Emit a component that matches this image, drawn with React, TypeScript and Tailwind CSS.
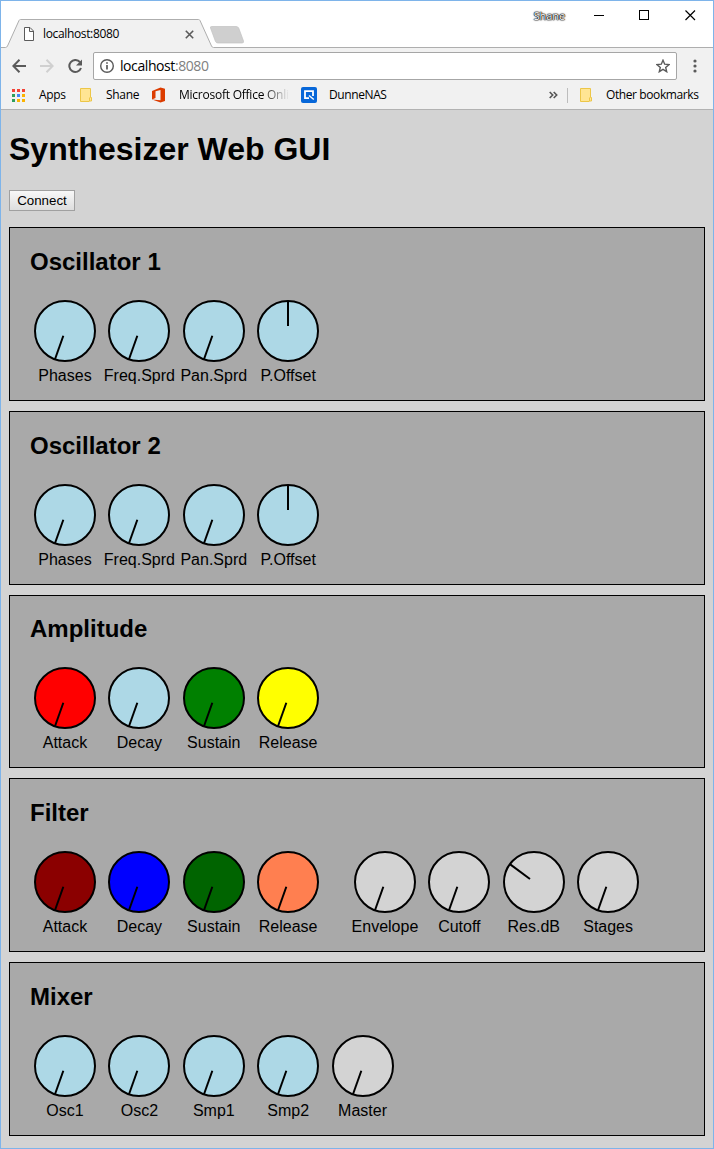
import React from "react";

type KnobSpec = { label: string; color: string; angle?: number };

const BLUE = "#add8e6";
const GRAY = "#d3d3d3";

function Knob({ label, color, angle = 199.5 }: KnobSpec) {
  return (
    <div className="flex w-[74.4px] shrink-0 flex-col items-center">
      <svg width="62" height="62" viewBox="-31 -31 62 62" className="block">
        <circle r="30" fill={color} stroke="#000" strokeWidth="2" />
        <line y1="-5" y2="-30" stroke="#000" strokeWidth="2" transform={`rotate(${angle})`} />
      </svg>
      <div className="mt-[5px] h-[18px] text-base leading-[18px] whitespace-nowrap">{label}</div>
    </div>
  );
}

function Panel({ title, groups }: { title: string; groups: KnobSpec[][] }) {
  return (
    <section className="h-[173.75px] shrink-0 border border-black bg-[#a9a9a9] pt-[19.9px]">
      <h2 className="h-7 pl-5 text-2xl leading-7 font-bold">{title}</h2>
      <div className="mt-6 flex gap-[22.4px] pl-[17.8px]">
        {groups.map((g, i) => (
          <div key={i} className="flex">
            {g.map((k) => (
              <Knob key={k.label} {...k} />
            ))}
          </div>
        ))}
      </div>
    </section>
  );
}

const osc: KnobSpec[][] = [
  [
    { label: "Phases", color: BLUE },
    { label: "Freq.Sprd", color: BLUE },
    { label: "Pan.Sprd", color: BLUE },
    { label: "P.Offset", color: BLUE, angle: 0 },
  ],
];

const panels: { title: string; groups: KnobSpec[][] }[] = [
  { title: "Oscillator 1", groups: osc },
  { title: "Oscillator 2", groups: osc },
  {
    title: "Amplitude",
    groups: [
      [
        { label: "Attack", color: "#ff0000" },
        { label: "Decay", color: BLUE },
        { label: "Sustain", color: "#008000" },
        { label: "Release", color: "#ffff00" },
      ],
    ],
  },
  {
    title: "Filter",
    groups: [
      [
        { label: "Attack", color: "#8b0000" },
        { label: "Decay", color: "#0000ff" },
        { label: "Sustain", color: "#006400" },
        { label: "Release", color: "#ff7f50" },
      ],
      [
        { label: "Envelope", color: GRAY },
        { label: "Cutoff", color: GRAY },
        { label: "Res.dB", color: GRAY, angle: -53.5 },
        { label: "Stages", color: GRAY },
      ],
    ],
  },
  {
    title: "Mixer",
    groups: [
      [
        { label: "Osc1", color: BLUE },
        { label: "Osc2", color: BLUE },
        { label: "Smp1", color: BLUE },
        { label: "Smp2", color: BLUE },
        { label: "Master", color: GRAY },
      ],
    ],
  },
];

function FolderIcon() {
  return (
    <svg width="12" height="14" viewBox="0 0 12 14" className="block shrink-0">
      <path d="M.5.5h10v9h1v3.500h-2.500v.5H.5z" fill="#ffe593" stroke="#ecc648" />
      <path d="M9.500 9.500v3.500" stroke="#ecc648" fill="none" />
    </svg>
  );
}

function AppsIcon() {
  const colors = ["#f34235", "#f34235", "#f34235", "#2e9e5b", "#3f86f5", "#fbb300", "#2e9e5b", "#fbb300", "#fbb300"];
  return (
    <svg width="13" height="13" viewBox="0 0 13 13" className="block shrink-0" shapeRendering="crispEdges">
      {colors.map((c, i) => (
        <rect key={i} x={(i % 3) * 5} y={Math.floor(i / 3) * 5} width="3" height="3" fill={c} />
      ))}
    </svg>
  );
}

function TabStrip() {
  return (
    <div className="relative flex h-[47px] bg-white">
      <svg width="712" height="47" viewBox="1 1 712 47" className="absolute inset-0">
        <path d="M0 47.500H5.500Q6.800 47.500 7.500 46L19 20.500Q19.500 19.500 20.500 19.500H198.500Q199.500 19.500 200 20.500L211.500 46Q212.200 47.500 213.500 47.500H714V49H0Z" fill="#f1f1f1" stroke="#aeaeae" />
        <path d="M211.500 26.500H236Q238 26.500 238.700 28L243.500 41Q244 43 242 43H218Q216.300 43 215.500 41.500L210.500 28Q210 26.500 211.500 26.500Z" fill="#cfcfcf" stroke="#c2c2c2" strokeWidth=".7" />
      </svg>
      <div className="relative mt-[19px] ml-[22px] flex h-[28px] w-[173px] items-center">
        <svg width="12" height="14" viewBox="0 0 12 14" className="block">
          <path d="M1.500.5H7L10.500 4V13.500H1.500ZM6.500.5V4.500H10.500" fill="#fff" stroke="#5a5a5a" />
        </svg>
        <span className="ml-2 font-['Open_Sans',sans-serif] text-[12px] tracking-[-0.35px]">localhost:8080</span>
        <svg width="9" height="9" viewBox="0 0 9 9" className="mr-[2px] ml-auto block">
          <path d="M.8.8L8.200 8.200M8.200.8L.8 8.200" stroke="#5a5a5a" strokeWidth="1.600" />
        </svg>
      </div>
      <div className="relative ml-auto flex h-[29px] items-center pr-[17px]">
        <span className="mr-[29px] pt-px font-['Open_Sans',sans-serif] text-[11px] tracking-[-0.1px] text-white [text-shadow:0_0_1px_#000,0_0_1px_#000,0_0_2px_#000,0_0_1px_#000]">Shane</span>
        <svg width="102" height="11" viewBox="0 0 102 11" className="block" shapeRendering="crispEdges">
          <path d="M0 5.500H10M45.500.5H54.500V9.500H45.500Z" fill="none" stroke="#000" />
          <path d="M91.500.5L101 10M101 .5L91.500 10" fill="none" stroke="#000" strokeWidth="1.200" shapeRendering="auto" />
        </svg>
      </div>
    </div>
  );
}

function Toolbar() {
  return (
    <div className="flex h-[36px] items-center bg-[#f1f1f1] pl-[11px]">
      <svg width="14" height="14" viewBox="0 0 14 14" className="block" fill="none" stroke="#5a5a5a" strokeWidth="2">
        <path d="M14 7H1.500M7.500.8L1.300 7L7.500 13.200" />
      </svg>
      <svg width="14" height="14" viewBox="0 0 14 14" className="ml-[14px] block" fill="none" stroke="#d0d0d0" strokeWidth="2">
        <path d="M0 7H12.500M6.500.8L12.700 7L6.500 13.200" />
      </svg>
      <svg width="15" height="15" viewBox="0 0 15 15" className="ml-[14px] block">
        <path d="M12 3.200A6 6 0 1 0 13 9" fill="none" stroke="#5a5a5a" strokeWidth="2" />
        <path d="M14 .5V6.500H8Z" fill="#5a5a5a" />
      </svg>
      <div className="ml-[10px] flex h-[28px] w-[584px] items-center rounded-[2px] border border-[#a6a6a6] bg-white pr-[6px] pl-[6px]">
        <svg width="14" height="14" viewBox="0 0 14 14" className="block">
          <circle cx="7" cy="7" r="6.300" fill="none" stroke="#5a5a5a" strokeWidth="1.400" />
          <path d="M7 6V10.500M7 3.200V4.800" stroke="#5a5a5a" strokeWidth="1.700" />
        </svg>
        <span className="ml-[6px] font-['Open_Sans',sans-serif] text-[14px] leading-5 tracking-[-0.42px]">
          localhost<span className="text-[#808080]">:8080</span>
        </span>
        <svg width="14" height="14" viewBox="0 0 14 14" className="ml-auto block">
          <path d="M7 1.200L8.700 5.200L13 5.600L9.700 8.400L10.700 12.700L7 10.400L3.300 12.700L4.300 8.400L1 5.600L5.300 5.200Z" fill="none" stroke="#5a5a5a" strokeWidth="1.400" />
        </svg>
      </div>
      <svg width="4" height="14" viewBox="0 0 4 14" className="ml-[16px] block" fill="#5a5a5a">
        <circle cx="2" cy="2" r="1.600" />
        <circle cx="2" cy="7" r="1.600" />
        <circle cx="2" cy="12" r="1.600" />
      </svg>
    </div>
  );
}

function Bookmarks() {
  return (
    <div className="flex h-[26px] items-center border-b border-[#b2b2b2] bg-[#f1f1f1] pb-[3px] pl-[11px] font-['Open_Sans',sans-serif] text-[12px] leading-4 whitespace-nowrap">
      <AppsIcon />
      <span className="ml-[14px] w-[41px] tracking-[-0.3px]">Apps</span>
      <FolderIcon />
      <span className="ml-[14px] w-[46px] tracking-[-0.3px]">Shane</span>
      <svg width="13" height="16" viewBox="0 0 13 16" className="block shrink-0">
        <path d="M0 4L8.500 .5L13 1.800V14L8.500 15.500L0 12.500L8.500 13.300V3L3.500 4.300V11L0 12.500Z" fill="#dc3c00" />
      </svg>
      <span className="ml-[14px] w-[110px] tracking-[-0.24px] [mask-image:linear-gradient(to_right,#000_84px,transparent_110px)]">Microsoft Office Onli</span>
      <svg width="16" height="16" viewBox="0 0 16 16" className="ml-[12px] block shrink-0">
        <rect width="16" height="16" rx="2" fill="#0767d9" />
        <path d="M8 11.200H4V4.200H12V9" fill="none" stroke="#fff" strokeWidth="1.800" />
        <path d="M8 8.500L12.800 12.500" fill="none" stroke="#fff" strokeWidth="1.500" />
      </svg>
      <span className="ml-[12px] tracking-[-0.4px]">DunneNAS</span>
      <svg width="9" height="8" viewBox="0 0 9 8" className="ml-auto block shrink-0" fill="none" stroke="#555" strokeWidth="1.600">
        <path d="M.7 1L3.700 4L.7 7M4.700 1L7.700 4L4.700 7" />
      </svg>
      <span className="mr-3 ml-[9px] h-[15px] w-px bg-[#bdbdbd]" />
      <FolderIcon />
      <span className="mr-[14px] ml-[14px] w-[93px] tracking-[-0.4px]">Other bookmarks</span>
    </div>
  );
}

export default function App() {
  return (
    <div className="flex h-[1149px] w-[714px] flex-col overflow-hidden border border-[#7eb4ea] bg-[#d3d3d3] font-['Liberation_Sans',Arial,sans-serif] text-black">
      <TabStrip />
      <Toolbar />
      <Bookmarks />
      <main className="flex flex-col items-stretch px-2 pt-[21px]">
        <h1 className="h-[37px] text-[32px] leading-[37px] font-bold">Synthesizer Web GUI</h1>
        <button className="mt-[22px] h-[21px] w-[66px] self-start border border-[#a0a0a0] bg-linear-to-b from-[#f8f8f8] to-[#dddddd] text-[13.333px] leading-[17px]">
          Connect
        </button>
        <div className="mt-4 flex flex-col gap-[10px]">
          {panels.map((p) => (
            <Panel key={p.title} {...p} />
          ))}
        </div>
      </main>
    </div>
  );
}
